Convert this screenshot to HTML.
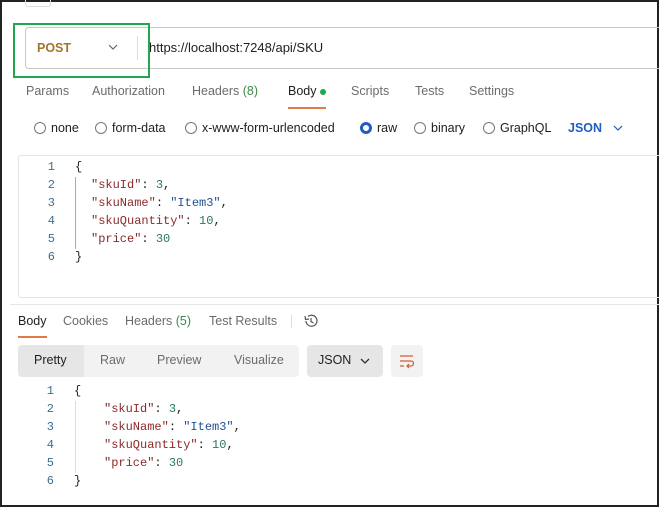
<!DOCTYPE html>
<html><head><style>
*{margin:0;padding:0;box-sizing:border-box}
body{width:659px;height:507px;background:#fff;position:relative;overflow:hidden;font-family:"Liberation Sans",sans-serif;font-size:12.5px;color:#212121}
.a{position:absolute;white-space:nowrap}
.mono{font-family:"Liberation Mono",monospace;font-size:12px}
.ln{color:#3d6e8f;width:20px;text-align:right}
.k{color:#8b2a2a}.n{color:#2a7a5a}.s{color:#1f4f8f}.p{color:#333}
.radio{position:absolute;width:12px;height:12px;border:1px solid #777;border-radius:50%}
.tab{color:#6b6b6b}
</style></head><body>
<div class="a" style="left:0;top:0;width:659px;height:507px;border:2px solid #222;border-right-width:2px"></div>
<div class="a" style="left:25px;top:-4px;width:26px;height:11px;border:1px solid #ddd;border-radius:3px"></div>
<!-- url bar -->
<div class="a" style="left:25px;top:27px;width:640px;height:42px;border:1px solid #c8c8c8;border-radius:4px"></div>
<div class="a" style="left:137px;top:36px;width:1px;height:24px;background:#ddd"></div>
<div class="a" style="left:37px;top:41px;font-weight:bold;color:#a1762a;font-size:12.5px">POST</div>
<svg class="a" style="left:108px;top:43px" width="10" height="8"><path d="M1 2 L5 6 L9 2" fill="none" stroke="#666" stroke-width="1.2"/></svg>
<div class="a" style="left:149px;top:40px;font-size:13px">https://localhost:7248/api/SKU</div>
<div class="a" style="left:13px;top:23px;width:137px;height:55px;border:2px solid #1fa84f"></div>
<!-- tabs -->
<div class="a tab" style="left:26px;top:84px">Params</div>
<div class="a tab" style="left:92px;top:84px">Authorization</div>
<div class="a tab" style="left:192px;top:84px">Headers <span style="color:#3d8a4a">(8)</span></div>
<div class="a" style="left:288px;top:84px">Body</div>
<div class="a" style="left:320px;top:89px;width:6px;height:6px;border-radius:50%;background:#1fa84f"></div>
<div class="a" style="left:288px;top:107px;width:38px;height:2px;background:#e07a4a"></div>
<div class="a tab" style="left:351px;top:84px">Scripts</div>
<div class="a tab" style="left:415px;top:84px">Tests</div>
<div class="a tab" style="left:469px;top:84px">Settings</div>
<!-- radios -->
<div class="radio" style="left:34px;top:122px"></div><div class="a" style="left:51px;top:121px">none</div>
<div class="radio" style="left:95px;top:122px"></div><div class="a" style="left:112px;top:121px">form-data</div>
<div class="radio" style="left:185px;top:122px"></div><div class="a" style="left:202px;top:121px">x-www-form-urlencoded</div>
<div class="radio" style="left:360px;top:122px;border:3px solid #1f5fbf"></div><div class="a" style="left:377px;top:121px">raw</div>
<div class="radio" style="left:414px;top:122px"></div><div class="a" style="left:431px;top:121px">binary</div>
<div class="radio" style="left:483px;top:122px"></div><div class="a" style="left:500px;top:121px">GraphQL</div>
<div class="a" style="left:568px;top:121px;color:#1f5fbf;font-weight:bold">JSON</div>
<svg class="a" style="left:613px;top:124px" width="10" height="8"><path d="M1 2 L5 6 L9 2" fill="none" stroke="#1f5fbf" stroke-width="1.2"/></svg>
<!-- request editor -->
<div class="a" style="left:18px;top:155px;width:650px;height:143px;border:1px solid #e4e4e4;border-radius:3px"></div>
<div class="a" style="left:75px;top:177px;width:1px;height:72px;background:#aaa"></div>
<div class="a mono" style="left:35px;top:158px;line-height:18px">
<div><span class="a ln" style="position:relative;display:inline-block">1</span><span style="margin-left:20px">{</span></div>
<div><span class="ln" style="display:inline-block">2</span><span style="margin-left:36px" class="k">"skuId"</span>: <span class="n">3</span>,</div>
<div><span class="ln" style="display:inline-block">3</span><span style="margin-left:36px" class="k">"skuName"</span>: <span class="s">"Item3"</span>,</div>
<div><span class="ln" style="display:inline-block">4</span><span style="margin-left:36px" class="k">"skuQuantity"</span>: <span class="n">10</span>,</div>
<div><span class="ln" style="display:inline-block">5</span><span style="margin-left:36px" class="k">"price"</span>: <span class="n">30</span></div>
<div><span class="ln" style="display:inline-block">6</span><span style="margin-left:20px">}</span></div>
</div>
<div class="a" style="left:10px;top:304px;width:650px;height:1px;background:#e6e6e6"></div>
<!-- response tabs -->
<div class="a" style="left:18px;top:314px">Body</div>
<div class="a" style="left:18px;top:336px;width:29px;height:2px;background:#e07a4a"></div>
<div class="a tab" style="left:63px;top:314px">Cookies</div>
<div class="a tab" style="left:125px;top:314px">Headers <span style="color:#3d8a4a">(5)</span></div>
<div class="a tab" style="left:209px;top:314px">Test Results</div>
<div class="a" style="left:291px;top:315px;width:1px;height:13px;background:#ddd"></div>
<svg class="a" style="left:303px;top:313px" width="16" height="16"><path d="M3 8 A5.5 5.5 0 1 0 5 3.5" fill="none" stroke="#555" stroke-width="1.2"/><path d="M2 3 L2.5 6.5 L6 6" fill="none" stroke="#555" stroke-width="1.2"/><path d="M8 5 V8.5 L10.5 10" fill="none" stroke="#555" stroke-width="1.2"/></svg>
<!-- toolbar -->
<div class="a" style="left:18px;top:345px;width:281px;height:32px;background:#f2f2f2;border-radius:4px"></div>
<div class="a" style="left:18px;top:345px;width:66px;height:32px;background:#e6e6e6;border-radius:4px 0 0 4px"></div>
<div class="a" style="left:34px;top:353px">Pretty</div>
<div class="a tab" style="left:100px;top:353px">Raw</div>
<div class="a tab" style="left:157px;top:353px">Preview</div>
<div class="a tab" style="left:234px;top:353px">Visualize</div>
<div class="a" style="left:307px;top:345px;width:76px;height:32px;background:#e6e6e6;border-radius:4px"></div>
<div class="a" style="left:318px;top:353px">JSON</div>
<svg class="a" style="left:360px;top:357px" width="10" height="8"><path d="M1 2 L5 6 L9 2" fill="none" stroke="#333" stroke-width="1.3"/></svg>
<div class="a" style="left:391px;top:345px;width:32px;height:32px;background:#f2f2f2;border-radius:4px"></div>
<svg class="a" style="left:399px;top:353px" width="16" height="16"><path d="M1 3 H14 M1 8 H12 A2.5 2.5 0 0 1 12 13 H8 M10 11 L8 13 L10 15 M1 13 H5" fill="none" stroke="#d65a32" stroke-width="1.2"/></svg>
<!-- response code -->
<div class="a" style="left:75px;top:401px;width:1px;height:72px;background:#ddd"></div>
<div class="a mono" style="left:34px;top:382px;line-height:18px">
<div><span class="ln" style="display:inline-block">1</span><span style="margin-left:20px">{</span></div>
<div><span class="ln" style="display:inline-block">2</span><span style="margin-left:50px" class="k">"skuId"</span>: <span class="n">3</span>,</div>
<div><span class="ln" style="display:inline-block">3</span><span style="margin-left:50px" class="k">"skuName"</span>: <span class="s">"Item3"</span>,</div>
<div><span class="ln" style="display:inline-block">4</span><span style="margin-left:50px" class="k">"skuQuantity"</span>: <span class="n">10</span>,</div>
<div><span class="ln" style="display:inline-block">5</span><span style="margin-left:50px" class="k">"price"</span>: <span class="n">30</span></div>
<div><span class="ln" style="display:inline-block">6</span><span style="margin-left:20px">}</span></div>
</div>
</body></html>
